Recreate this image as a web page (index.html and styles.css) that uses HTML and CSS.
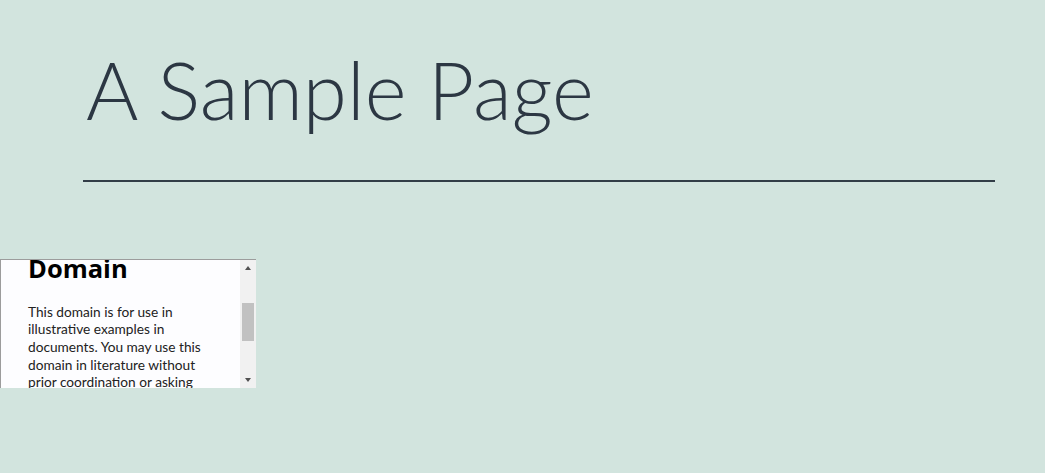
FILE: index.html
```html
<!DOCTYPE html>
<html>
<head>
<meta charset="utf-8">
<title>A Sample Page</title>
<link rel="stylesheet" href="styles.css">
</head>
<body>
<header class="page-header">
  <h1 class="title">A Sample Page</h1>
</header>
<div class="frame">
  <div class="frame-view">
    <div class="frame-doc">
      <h1 class="doc-title">Example Domain</h1>
      <p class="doc-text">This domain is for use in illustrative examples in documents. You may use this domain in literature without prior coordination or asking for permission.</p>
      <p class="doc-text"><a href="#">More information...</a></p>
    </div>
  </div>
  <div class="scrollbar">
    <div class="arrow arrow-up"></div>
    <div class="track"><div class="thumb"></div></div>
    <div class="arrow arrow-down"></div>
  </div>
</div>
</body>
</html>
```
FILE: styles.css
```css
html, body {
  margin: 0;
  padding: 0;
}
body {
  background: #d2e4de;
  width: 1045px;
  height: 473px;
  overflow: hidden;
}
.page-header {
  margin-left: 83px;
  width: 912px;
  border-bottom: 2px solid #323d47;
  padding-top: 49px;
  box-sizing: border-box;
  height: 182px;
}
.title {
  margin: 0 0 0 3px;
  font-family: "Lato", "Open Sans", sans-serif;
  font-weight: 300;
  font-size: 80px;
  line-height: 80px;
  color: #2c3743;
}
.frame {
  margin-top: 77px;
  width: 256px;
  height: 129px;
  display: flex;
  box-sizing: border-box;
  border-top: 1px solid #9c9c9c;
  border-left: 1px solid #9c9c9c;
  background: #fff;
}
.frame-view {
  flex: 1;
  overflow: hidden;
  background: #fdfdff;
}
.frame-doc {
  margin-top: -37px;
  padding: 0 0 0 27px;
  width: 183px;
  font-family: "Lato", "Open Sans", sans-serif;
  color: #222;
}
.doc-title {
  margin: 0;
  font-family: "Open Sans", "Lato", sans-serif;
  font-size: 25.5px;
  line-height: 30px;
  font-weight: 700;
  color: #000;
}
.doc-text {
  margin: 19.5px 0 0 0;
  font-size: 13.7px;
  line-height: 17.7px;
}
.doc-text a {
  color: #38488f;
}
.scrollbar {
  width: 16px;
  display: flex;
  flex-direction: column;
  background: #f1f1f1;
}
.arrow {
  height: 16px;
  display: flex;
  align-items: center;
  justify-content: center;
}
.arrow::before {
  content: "";
  width: 0;
  height: 0;
  border-left: 3px solid transparent;
  border-right: 3px solid transparent;
}
.arrow-up::before {
  border-bottom: 4px solid #505050;
}
.arrow-down::before {
  border-top: 4px solid #505050;
}
.track {
  flex: 1;
  padding-top: 27px;
  display: flex;
  justify-content: center;
}
.thumb {
  width: 12px;
  height: 38px;
  background: #c1c1c1;
}
```
